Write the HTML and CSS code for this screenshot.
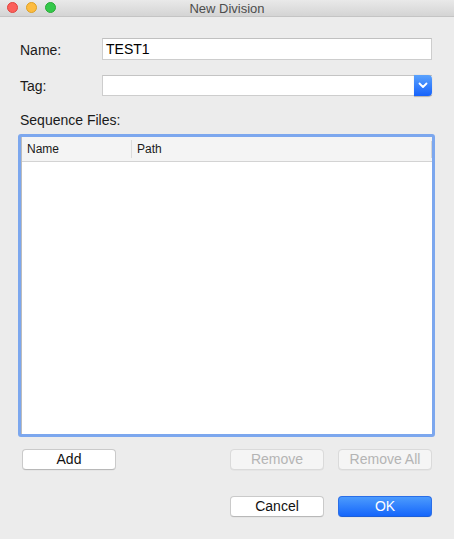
FILE: index.html
```html
<!DOCTYPE html>
<html>
<head>
<meta charset="utf-8">
<link rel="stylesheet" href="styles.css">
</head>
<body>
<div class="window">
  <div class="titlebar">
    <div class="lights">
      <span class="light red"></span>
      <span class="light yellow"></span>
      <span class="light green"></span>
    </div>
    <div class="title">New Division</div>
  </div>
  <div class="content">
    <div class="form">
      <label class="label">Name:</label>
      <div class="field">TEST1</div>
      <label class="label">Tag:</label>
      <div class="select">
        <div class="select-value"></div>
        <div class="select-btn">
          <svg width="10" height="7" viewBox="0 0 10 7"><path d="M1.5 1.5 L5 5 L8.5 1.5" fill="none" stroke="#fff" stroke-width="1.8" stroke-linecap="round" stroke-linejoin="round"/></svg>
        </div>
      </div>
    </div>
    <div class="section-label">Sequence Files:</div>
    <div class="table-ring">
      <div class="table">
        <div class="thead">
          <div class="th th-name">Name</div>
          <div class="th th-path">Path</div>
          <div class="th-end"></div>
        </div>
        <div class="tbody"></div>
      </div>
    </div>
    <div class="table-buttons">
      <button class="btn">Add</button>
      <div class="spacer"></div>
      <button class="btn" disabled>Remove</button>
      <button class="btn" disabled>Remove All</button>
    </div>
    <div class="dialog-buttons">
      <button class="btn">Cancel</button>
      <button class="btn primary">OK</button>
    </div>
  </div>
</div>
</body>
</html>
```
FILE: styles.css
```css
* { box-sizing: border-box; }
html, body { margin: 0; padding: 0; }
body {
  font-family: "Liberation Sans", Arial, sans-serif;
  font-size: 14px;
  color: #1a1a1a;
  background: #ececec;
}
.window {
  width: 454px;
  height: 539px;
  background: #ececec;
  display: flex;
  flex-direction: column;
}
.titlebar {
  height: 17px;
  flex: none;
  display: flex;
  align-items: center;
  justify-content: center;
  background: linear-gradient(#e9e9e9, #d4d4d4);
  border-bottom: 1px solid #c4c4c4;
  position: relative;
}
.lights {
  position: absolute;
  left: 7px;
  top: 2px;
  display: flex;
  gap: 8px;
}
.light {
  width: 11px;
  height: 11px;
  border-radius: 50%;
  display: block;
}
.red { background: #fc605b; border: 0.5px solid #e0443e; }
.yellow { background: #fdbc40; border: 0.5px solid #dea123; }
.green { background: #34c84a; border: 0.5px solid #27aa35; }
.title {
  font-size: 13px;
  color: #4d4d4d;
  line-height: 16px;
  margin-top: 1px;
}
.content {
  flex: 1;
  display: flex;
  flex-direction: column;
  padding: 21px 22px 0 20px;
}
.form {
  display: grid;
  grid-template-columns: 82px 1fr;
  row-gap: 15px;
  align-items: center;
}
.label {
  color: #1a1a1a;
  line-height: 16px;
  padding-top: 1px;
}
.field {
  height: 22px;
  background: #fff;
  border: 1px solid #cdcdcd;
  border-top-color: #c0c0c0;
  padding: 0 3px;
  line-height: 20px;
  color: #000;
}
.select {
  height: 21px;
  display: flex;
  background: #fff;
  border: 1px solid #cdcdcd;
  border-top-color: #c4c4c4;
  border-right: none;
}
.select-value { flex: 1; }
.select-btn {
  width: 18px;
  margin: -1px 0 -1px 0;
  background: linear-gradient(#5aa2fd, #1662fb);
  border-radius: 0 4px 4px 0;
  display: flex;
  align-items: center;
  justify-content: center;
  box-shadow: 0 0.5px 1px rgba(0,0,0,0.25);
}
.section-label {
  margin-top: 16px;
  line-height: 17px;
}
.table-ring {
  margin: 5px 0 0 -2px;
  width: 417px;
  height: 303px;
  border: 3px solid #7ca7ee;
  border-radius: 3px;
  background: #fff;
}
.table {
  height: 100%;
  display: flex;
  flex-direction: column;
  border-left: 1px solid #bcbcbc;
}
.thead {
  height: 25px;
  flex: none;
  display: flex;
  align-items: center;
  background: #f4f4f4;
  border-bottom: 1px solid #d3d3d3;
  font-size: 12px;
  color: #1a1a1a;
}
.th { padding-left: 5px; padding-top: 1px; }
.th-name {
  width: 110px;
  border-right: 1px solid #dcdcdc;
  line-height: 17px;
}
.th-path { flex: 1; line-height: 17px; }
.th-end {
  width: 1px;
  height: 17px;
  background: #d6d6d6;
}
.tbody { flex: 1; background: #fff; }
.table-buttons {
  margin-top: 12px;
  display: flex;
  gap: 14px;
  padding-left: 2px;
}
.spacer { flex: 1; }
.btn {
  width: 94px;
  height: 21px;
  font-family: inherit;
  font-size: 14px;
  color: #111;
  background: #fff;
  border: 1px solid #cacaca;
  border-bottom-color: #b8b8b8;
  border-radius: 4px;
  padding: 0;
  line-height: 19px;
  box-shadow: 0 0.5px 0.5px rgba(0,0,0,0.06);
}
.btn:disabled {
  background: #f5f5f5;
  color: #b4b4b4;
  border-color: #dadada;
}
.dialog-buttons {
  margin-top: 26px;
  display: flex;
  justify-content: flex-end;
  gap: 14px;
}
.btn.primary {
  background: linear-gradient(#4c9bfd, #1566fb);
  border-color: #2a6ee8;
  border-bottom-color: #1d5fd8;
  color: #fff;
  font-size: 14px;
}
```
